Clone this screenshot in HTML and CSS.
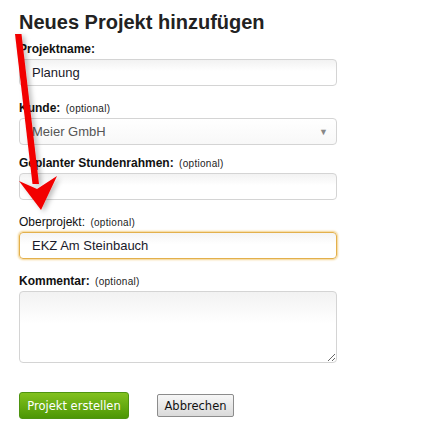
FILE: index.html
```html
<!DOCTYPE html>
<html lang="de">
<head>
  <meta charset="UTF-8">
  <title>Neues Projekt hinzufügen</title>
  <link rel="stylesheet" href="styles.css">
</head>
<body>

  <div class="page">
    <h1>Neues Projekt hinzufügen</h1>

    <div class="form-group">
      <label>Projektname:</label>
      <input type="text" class="field" value="Planung">
    </div>

    <div class="form-group short">
      <label>Kunde: <span class="opt">(optional)</span></label>
      <div class="field select">
        <span>Meier GmbH</span>
        <span class="caret">&#9660;</span>
      </div>
    </div>

    <div class="form-group">
      <label>Geplanter Stundenrahmen: <span class="opt">(optional)</span></label>
      <input type="text" class="field">
    </div>

    <div class="form-group">
      <label class="plain">Oberprojekt: <span class="opt">(optional)</span></label>
      <input type="text" class="field focus" value="EKZ Am Steinbauch">
    </div>

    <div class="form-group">
      <label>Kommentar: <span class="opt">(optional)</span></label>
      <textarea class="field area"></textarea>
    </div>

    <div class="buttons">
      <button class="btn-create">Projekt erstellen</button>
      <button class="btn-cancel">Abbrechen</button>
    </div>
  </div>

  <!-- red annotation arrow drawn over the form -->
  <svg class="arrow" width="80" height="220" viewBox="0 0 80 220">
    <defs>
      <filter id="shade" x="-50%" y="-10%" width="200%" height="130%">
        <feDropShadow dx="3" dy="2" stdDeviation="2.5" flood-color="#000" flood-opacity="0.25"/>
      </filter>
    </defs>
    <g filter="url(#shade)" fill="#f20000">
      <polygon points="15,34 21.5,34 39,184 32.5,184"/>
      <polygon points="19,181 37,189 57,176 41,210"/>
    </g>
  </svg>

</body>
</html>
```

FILE: styles.css
```css
body {
  margin: 0;
  font-family: "Liberation Sans", Arial, sans-serif;
  color: #111;
  background: #fff;
}
.page {
  width: 318px;
  padding: 10px 0 0 19px;
}
h1 {
  font-size: 20px;
  line-height: 24px;
  font-weight: bold;
  color: #222;
  margin: 0 0 8px;
}
.form-group {
  margin-bottom: 15px;
}
.form-group.short {
  margin-bottom: 11px;
}
label {
  display: block;
  height: 14px;
  font-size: 12px;
  line-height: 14px;
  font-weight: bold;
  margin-bottom: 3px;
}
label.plain {
  font-weight: normal;
}
.opt {
  font-weight: normal;
  font-size: 10px;
  line-height: 10px;
  letter-spacing: 0.3px;
  margin-left: 2px;
  color: #222;
}
.field {
  display: block;
  box-sizing: border-box;
  width: 100%;
  height: 27px;
  margin: 0;
  padding: 0 12px;
  border: 1px solid #d4d4d4;
  border-radius: 4px;
  background: linear-gradient(#f2f2f2, #fff 45%);
  font-family: "Liberation Sans", Arial, sans-serif;
  font-size: 13px;
  color: #1a1a2a;
  outline: none;
}
.select {
  display: flex;
  align-items: center;
  justify-content: space-between;
  background: linear-gradient(#fff, #f8f8f8);
  color: #555;
  padding-right: 8px;
}
.caret {
  font-size: 9px;
  color: #888;
}
.focus {
  border: 1px solid #e3b04c;
  box-shadow: 0 0 2px 1px #f3d28c;
  background: linear-gradient(#f4f4f4, #fff 45%);
}
.area {
  height: 72px;
  resize: vertical;
}
.buttons {
  display: flex;
  align-items: center;
  gap: 28px;
  margin-top: 29px;
}
.btn-create,
.btn-cancel {
  font-family: "DejaVu Sans", Verdana, sans-serif;
  font-size: 11.5px;
  padding: 0;
  cursor: pointer;
}
.btn-create {
  width: 110px;
  height: 27px;
  border: 1px solid #4e9410;
  border-radius: 3px;
  background: linear-gradient(#82c11e, #4c9705);
  color: #fff;
}
.btn-cancel {
  width: 77px;
  height: 23px;
  border: 1px solid #8c8c8c;
  border-radius: 2px;
  background: linear-gradient(#f7f7f7, #dadada);
  color: #111;
}
.arrow {
  position: absolute;
  top: 0;
  left: 0;
  pointer-events: none;
}
```
